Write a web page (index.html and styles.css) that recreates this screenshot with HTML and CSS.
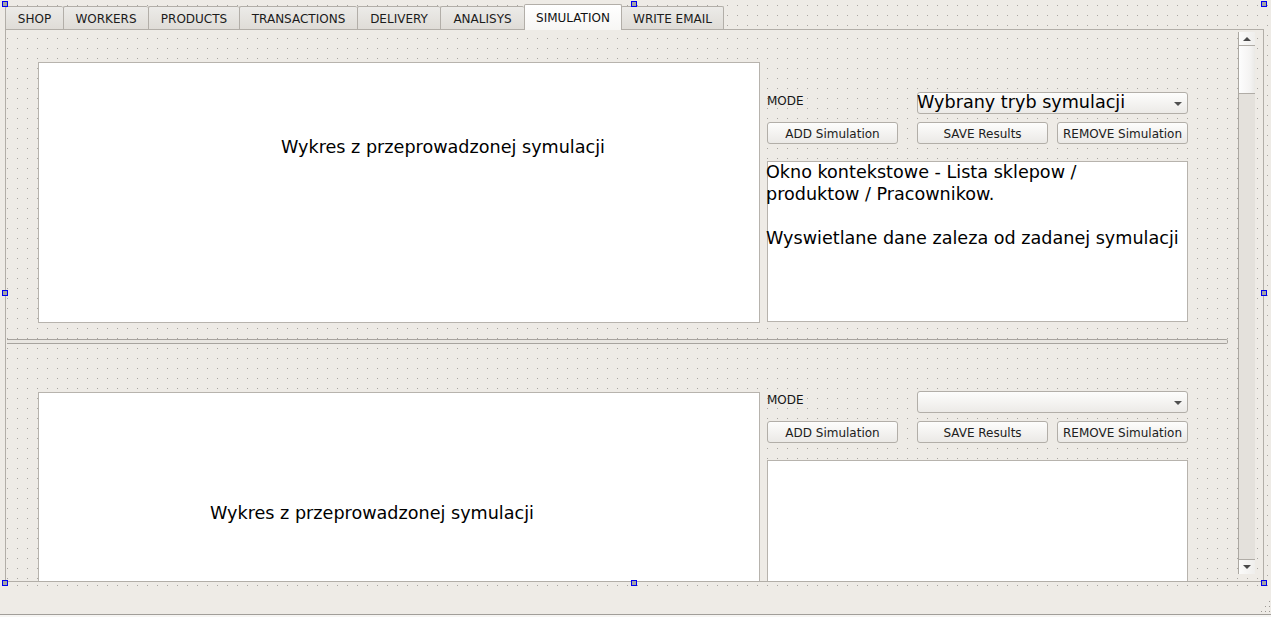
FILE: index.html
```html
<!DOCTYPE html>
<html lang="pl">
<head>
<meta charset="utf-8">
<title>Simulation</title>
<link rel="stylesheet" href="styles.css">
</head>
<body>
<div class="window">
  <div class="form dots">
    <div class="tabbar">
      <div class="tab">SHOP</div>
      <div class="tab">WORKERS</div>
      <div class="tab">PRODUCTS</div>
      <div class="tab">TRANSACTIONS</div>
      <div class="tab">DELIVERY</div>
      <div class="tab">ANALISYS</div>
      <div class="tab tab--active">SIMULATION</div>
      <div class="tab tab--last">WRITE EMAIL</div>
    </div>
    <div class="pane dots">
      <div class="viewport">
        <section class="sim sim--top">
          <div class="chart chart--top">Wykres z przeprowadzonej symulacji</div>
          <div class="controls controls--top">
            <div class="mode">MODE</div>
            <div class="combo"><span class="combo-text">Wybrany tryb symulacji</span><i class="combo-arrow"></i></div>
            <button class="btn">ADD Simulation</button>
            <button class="btn">SAVE Results</button>
            <button class="btn">REMOVE Simulation</button>
            <div class="context"><p class="context-text">Okno kontekstowe - Lista sklepow /<br>produktow / Pracownikow.<br><br>Wyswietlane dane zaleza od zadanej symulacji</p></div>
          </div>
        </section>
        <div class="splitter"></div>
        <section class="sim sim--bottom">
          <div class="chart chart--bottom">Wykres z przeprowadzonej symulacji</div>
          <div class="controls controls--bottom">
            <div class="mode">MODE</div>
            <div class="combo"><span class="combo-text"></span><i class="combo-arrow"></i></div>
            <button class="btn">ADD Simulation</button>
            <button class="btn">SAVE Results</button>
            <button class="btn">REMOVE Simulation</button>
            <div class="context context--empty"></div>
          </div>
        </section>
      </div>
      <div class="scrollbar">
        <div class="sb-btn sb-btn--up"><i class="sb-arrow sb-arrow--up"></i></div>
        <div class="sb-thumb"></div>
        <div class="sb-track"></div>
        <div class="sb-btn sb-btn--down"><i class="sb-arrow sb-arrow--down"></i></div>
      </div>
    </div>
  </div>
  <div class="statusbar">
    <svg class="grip" width="9" height="11" viewBox="0 0 9 11">
      <rect x="8" y="0" width="1" height="1" fill="#9a9792"/>
      <rect x="4" y="5" width="1" height="1" fill="#9a9792"/>
      <rect x="8" y="5" width="1" height="1" fill="#9a9792"/>
      <rect x="0" y="10" width="1" height="1" fill="#9a9792"/>
      <rect x="4" y="10" width="1" height="1" fill="#9a9792"/>
      <rect x="8" y="10" width="1" height="1" fill="#9a9792"/>
    </svg>
  </div>

  <span class="handle h-l h-t"></span>
  <span class="handle h-c h-t"></span>
  <span class="handle h-r h-t"></span>
  <span class="handle h-l h-m"></span>
  <span class="handle h-r h-m"></span>
  <span class="handle h-l h-b"></span>
  <span class="handle h-c h-b"></span>
  <span class="handle h-r h-b"></span>
</div>
</body>
</html>
```

FILE: styles.css
```css
:root {
  --bg: #eeebe6;
  --dot: #a9a6a1;
  --line: #b2aea8;
  --box: #b7b3ad;
}

* { box-sizing: border-box; }

html, body {
  margin: 0;
  height: 100%;
}

body {
  background: #f6f5f3;
  font-family: "DejaVu Sans", "Liberation Sans", sans-serif;
  color: #000;
  overflow: hidden;
}

.window {
  position: relative;
  width: 1271px;
  height: 617px;
  display: flex;
  flex-direction: column;
}

/* Qt Designer grid dots: one dot in each 10px cell */
.dots {
  background-color: var(--bg);
  background-image:
    linear-gradient(90deg, var(--bg) 9px, transparent 9px),
    linear-gradient(var(--bg) 9px, var(--dot) 9px);
  background-size: 10px 10px;
}

.form {
  flex: none;
  height: 589px;
  padding: 4px 0 0 5px;
  background-position: -2px -4px;
}

/* ---------- tabs ---------- */
.tabbar {
  display: grid;
  grid-template-columns: 58px 85px 91px 118px 83px 84px 97px 103px;
  width: max-content;
  height: 25px;
  align-items: end;
}

.tab {
  height: 23px;
  border: 1px solid var(--line);
  border-bottom: 0;
  border-right: 0;
  border-radius: 2px 2px 0 0;
  background: linear-gradient(#ecebe8, #dfdcd7);
  font-size: 12px;
  line-height: 14px;
  padding-top: 5px;
  text-align: center;
  color: #1b1b1b;
  white-space: nowrap;
}

.tab--active {
  position: relative;
  z-index: 2;
  height: 26px;
  margin-bottom: -1px;
  margin-right: -1px;
  padding-top: 6px;
  border-right: 1px solid var(--line);
  background: linear-gradient(#ffffff, #f7f6f4);
  color: #111;
}

.tab--last {
  border-right: 1px solid var(--line);
}

/* ---------- pane ---------- */
.pane {
  display: flex;
  width: 1259px;
  height: 553px;
  border: 1px solid var(--line);
  background-position: -8px -1px;
}

.viewport {
  flex: none;
  width: 1232px;
  height: 551px;
  overflow: hidden;
}

.sim {
  display: flex;
  align-items: flex-start;
  gap: 7px;
  padding-left: 32px;
}

.sim--top {
  height: 309px;
  padding-top: 32px;
}

.sim--bottom {
  padding-top: 48px;
}

.chart {
  flex: none;
  width: 722px;
  height: 261px;
  background: #fff;
  border: 1px solid var(--box);
  font-size: 17.6px;
  line-height: 22px;
  white-space: nowrap;
}

.chart--top {
  padding: 73px 0 0 242px;
}

.chart--bottom {
  padding: 109px 0 0 171px;
}

.controls {
  flex: none;
  width: 421px;
  display: grid;
  grid-template-columns: 150px 140px 131px;
  grid-template-rows: 22px 22px auto;
  row-gap: 8px;
}

.controls--top { margin-top: 30px; }
.controls--bottom { margin-top: -1px; }

.mode {
  font-size: 12px;
  line-height: 14px;
  padding-top: 2px;
  color: #151515;
}

.combo {
  grid-column: 2 / 4;
  display: flex;
  align-items: flex-start;
  height: 22px;
  border: 1px solid var(--line);
  border-radius: 3px;
  background: linear-gradient(#fdfdfc, #eceae7);
  padding-right: 5px;
}

.combo-text {
  font-size: 17.6px;
  line-height: 18px;
  white-space: nowrap;
  margin-left: -1px;
}

.combo-arrow {
  align-self: center;
  margin-left: auto;
  margin-top: 1px;
  width: 0;
  height: 0;
  border-left: 4px solid transparent;
  border-right: 4px solid transparent;
  border-top: 4px solid #505050;
}

.btn {
  width: 131px;
  height: 22px;
  margin: 0;
  padding: 1px 0 0;
  border: 1px solid var(--line);
  border-radius: 3px;
  background: linear-gradient(#fdfdfc, #ebe9e6);
  font-family: "DejaVu Sans", "Liberation Sans", sans-serif;
  font-size: 12px;
  line-height: 14px;
  color: #202020;
  text-align: center;
  white-space: nowrap;
}

.context {
  grid-column: 1 / 4;
  margin-top: 9px;
  height: 161px;
  background: #fff;
  border: 1px solid var(--box);
  font-size: 17.6px;
  line-height: 22px;
  white-space: nowrap;
}

.context-text {
  margin: -1px 0 0 -2px;
}

.context--empty {
  height: 200px;
}

.splitter {
  width: 1221px;
  height: 5px;
  margin-left: 1px;
  border: 1px solid #a7a39e;
  border-left: 0;
  border-radius: 0 2px 2px 0;
  background: #e9e6e1;
}

/* ---------- scrollbar ---------- */
.scrollbar {
  flex: none;
  width: 17px;
  height: 542px;
  margin-top: 2px;
  border-left: 1px solid #aca8a2;
  display: flex;
  flex-direction: column;
  background: #e4e1dc;
}

.sb-btn {
  display: flex;
  align-items: center;
  justify-content: center;
  background: linear-gradient(90deg, #fbfbfa, #efeeec);
}

.sb-btn--up {
  height: 14px;
  border-bottom: 1px solid #b0aca6;
}

.sb-btn--down {
  height: 15px;
  border-top: 1px solid #b0aca6;
}

.sb-thumb {
  height: 48px;
  border-bottom: 1px solid #b0aca6;
  background: linear-gradient(90deg, #fdfdfd, #f4f3f2 70%, #eae9e6);
}

.sb-track { flex: 1; }

.sb-arrow {
  width: 0;
  height: 0;
  border-left: 4px solid transparent;
  border-right: 4px solid transparent;
}

.sb-arrow--up {
  border-bottom: 4px solid #4a4a4a;
  margin-top: 1px;
}

.sb-arrow--down {
  border-top: 4px solid #4a4a4a;
}

/* ---------- status bar ---------- */
.statusbar {
  flex: none;
  height: 26px;
  display: flex;
  justify-content: flex-end;
  align-items: flex-end;
  padding: 0 1px 2px 0;
  background: var(--bg);
  border-top: 1px solid transparent;
  border-bottom: 1px solid #a19e99;
}

.grip { display: block; }

/* ---------- designer selection handles ---------- */
.handle {
  position: absolute;
  z-index: 5;
  width: 6px;
  height: 6px;
  border: 1px solid #0000f0;
  background: #a4a4a4;
}

.h-l { left: 2px; }
.h-c { left: 631px; }
.h-r { left: 1261px; }
.h-t { top: 1px; }
.h-m { top: 290px; }
.h-b { top: 580px; }
```
